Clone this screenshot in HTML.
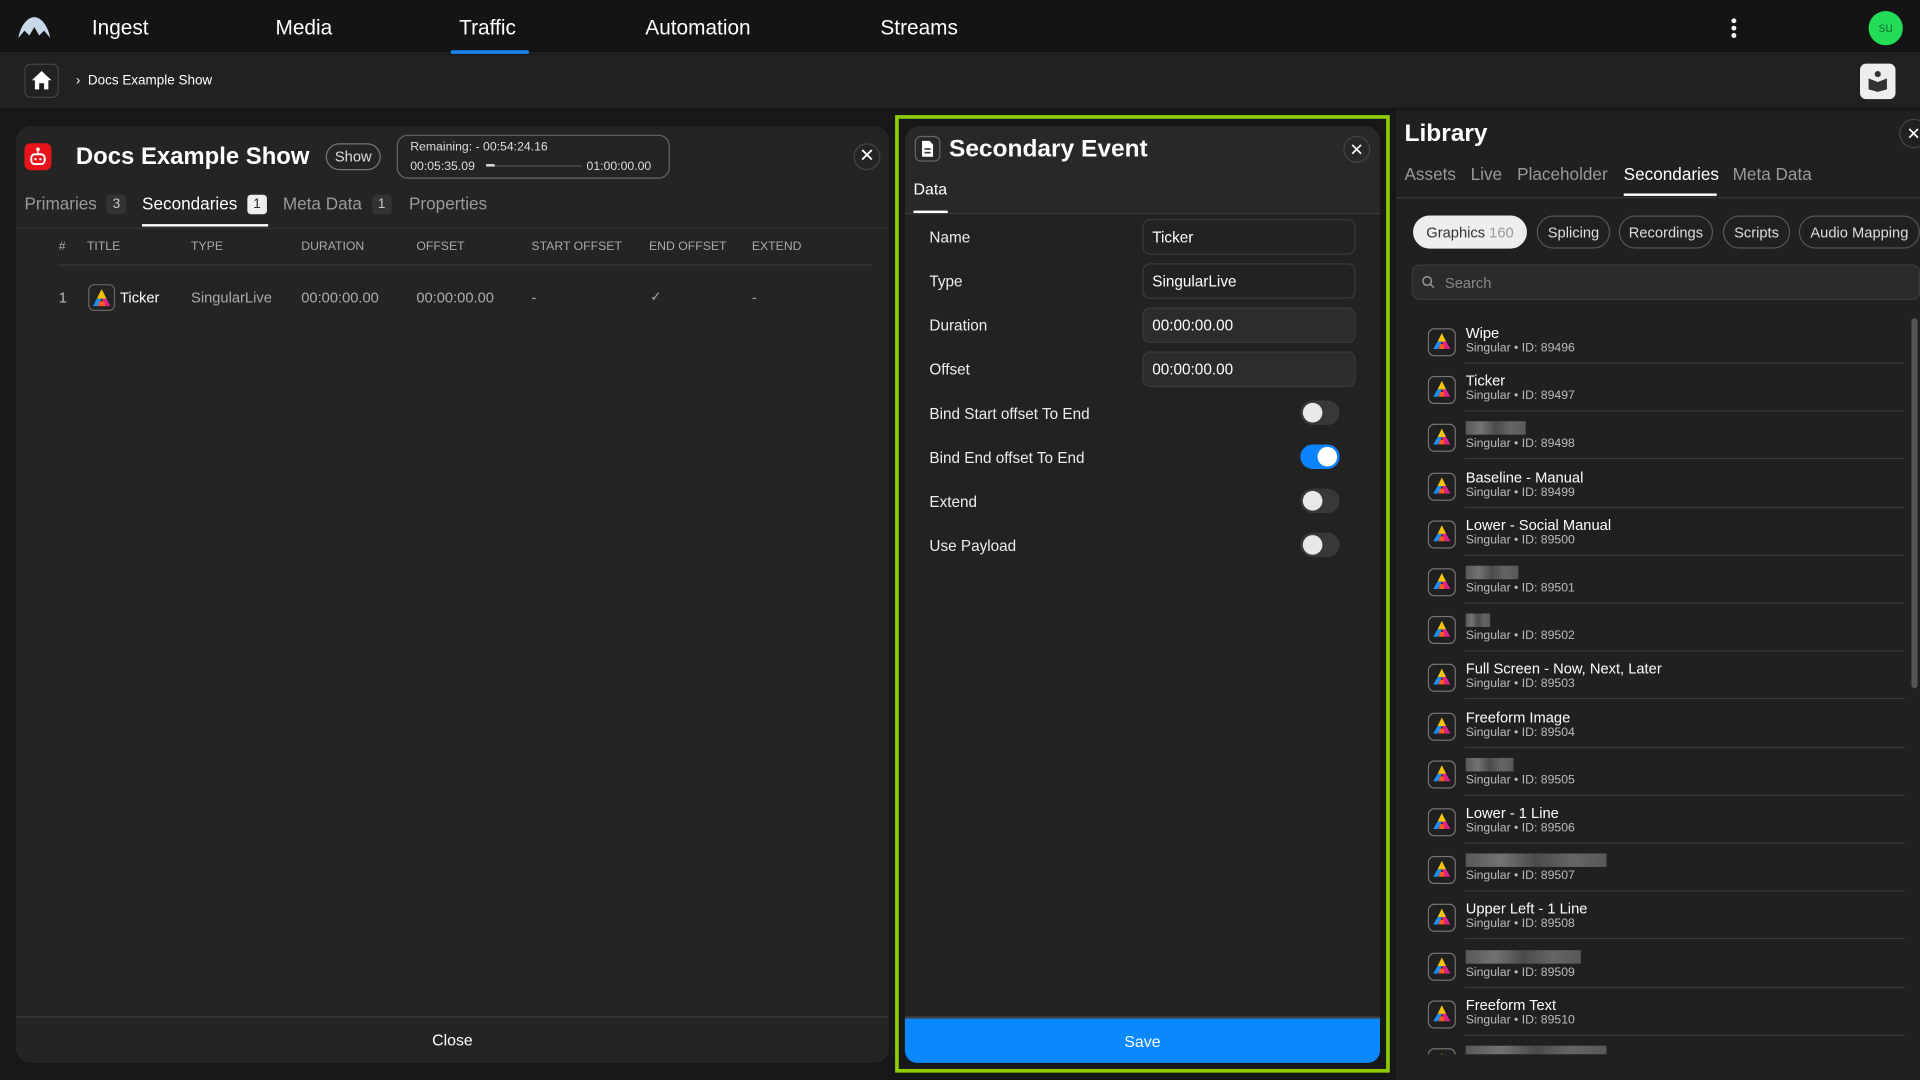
<!DOCTYPE html>
<html><head><meta charset="utf-8">
<style>
*{box-sizing:border-box;margin:0;padding:0}
html,body{width:1920px;height:1080px;overflow:hidden;background:#161616}
#w{width:1568px;height:882px;transform:scale(1.2244898);transform-origin:0 0;position:relative;font-family:"Liberation Sans",sans-serif;color:#fff;background:#171717}
.a{position:absolute}
.nav{left:0;top:0;width:1568px;height:44px;background:#141414;border-bottom:1px solid #2a2a2a}
.nav span{position:absolute;top:13px;font-size:17px;color:#fff}
.crumb{left:0;top:45px;width:1568px;height:43px;background:#212121}
.panel{background:#242424;border-radius:12px}
.tab{position:absolute;font-size:14px;color:#9a9a9a;white-space:nowrap}
.badge{display:inline-block;background:#333;color:#ccc;font-size:11px;padding:2px 5px;border-radius:3px;margin-left:8px;vertical-align:1px}
.th{position:absolute;top:196px;font-size:10px;color:#aaa}
.lbl{position:absolute;left:759px;font-size:12.5px;color:#eee}
.inp{position:absolute;left:933px;width:174px;height:29px;border:1px solid #3a3a3a;border-radius:6px;font-size:12.5px;padding:7px 7px;color:#fff}
.tg{position:absolute;left:1062px;width:32px;height:20px;border-radius:10px;background:#383838}
.tg i{position:absolute;left:2px;top:2px;width:16px;height:16px;border-radius:50%;background:#e8e8e8}
.chip{position:absolute;top:176px;height:27px;border:1px solid #555;border-radius:14px;font-size:12px;color:#ddd;padding:6px 0;text-align:center;white-space:nowrap}
.it{position:absolute;left:1166px;width:390px;height:39px}
.it svg{position:absolute;left:0;top:3px}
.it .t{position:absolute;left:31px;top:0;font-size:12px;color:#fff;white-space:nowrap}
.it .s{position:absolute;left:31px;top:14px;font-size:10px;color:#bbb}
.it .ln{position:absolute;left:30px;top:31px;width:359px;height:1px;background:#3a3a3a}
.blur{display:inline-block;height:11px;background:linear-gradient(90deg,#666,#888,#555,#777,#666);opacity:.8;margin-top:1px}
</style></head><body><div id="w">
<div class="a nav">
<svg class="a" style="left:14px;top:12px" width="28" height="20" viewBox="0 0 28 20"><path d="M1 19 C3 8 9 2 14 2 C19 2 25 8 27 19 L22 13 L18 17 L14 10 L10 17 L6 13 Z" fill="#c9d9ea"/></svg>
<span style="left:75px">Ingest</span><span style="left:225px">Media</span><span style="left:375px">Traffic</span><span style="left:527px">Automation</span><span style="left:719px">Streams</span>
<div class="a" style="left:368px;top:41px;width:64px;height:3px;background:#1a82f0;border-radius:2px"></div>
<div class="a" style="left:1414px;top:15px;width:4px;height:4px;border-radius:2px;background:#fff;box-shadow:0 6px #fff,0 12px #fff"></div>
<div class="a" style="left:1526px;top:9px;width:28px;height:28px;border-radius:50%;background:#22dd55;color:#173;font-size:11px;text-align:center;line-height:28px">su</div>
</div>
<div class="a crumb">
<div class="a" style="left:20px;top:7px;width:28px;height:28px;border:1px solid #444;border-radius:5px"></div>
<svg class="a" style="left:25px;top:12px" width="18" height="17" viewBox="0 0 18 17"><path d="M9 1 L17 8.5 L14.5 8.5 L14.5 16 L11 16 L11 11 L7 11 L7 16 L3.5 16 L3.5 8.5 L1 8.5 Z" fill="#fff"/></svg>
<div class="a" style="left:62px;top:15px;font-size:11px">›&nbsp; Docs Example Show</div>
<div class="a" style="left:1519px;top:7px;width:29px;height:29px;background:#eee;border-radius:5px"></div>
<svg class="a" style="left:1524px;top:12px" width="19" height="19" viewBox="0 0 19 19"><circle cx="9.5" cy="3.5" r="2.5" fill="#333"/><path d="M2 7 L9.5 10 L17 7 L17 16 L9.5 18 L2 16 Z" fill="#333"/></svg>
</div>

<div class="a panel" style="left:13px;top:103px;width:713px;height:765px"></div>
<div class="a" style="left:20px;top:117px;width:22px;height:22px;background:#e8141a;border-radius:5px"></div>
<svg class="a" style="left:24px;top:120px" width="14" height="16" viewBox="0 0 14 16"><circle cx="7" cy="2" r="1.5" fill="#fff"/><rect x="1.5" y="6" width="11" height="8" rx="3" fill="none" stroke="#fff" stroke-width="1.6"/><line x1="7" y1="3" x2="7" y2="6" stroke="#fff"/><circle cx="5" cy="10" r="1" fill="#fff"/><circle cx="9" cy="10" r="1" fill="#fff"/></svg>
<div class="a" style="left:62px;top:117px;font-size:19.5px;font-weight:bold">Docs Example Show</div>
<div class="a" style="left:266px;top:117px;width:45px;height:22px;border:1px solid #777;border-radius:11px;font-size:12px;text-align:center;line-height:20px;color:#ddd">Show</div>
<div class="a" style="left:324px;top:110px;width:223px;height:36px;border:1px solid #666;border-radius:9px"></div>
<div class="a" style="left:335px;top:115px;font-size:10px;color:#ddd">Remaining: - 00:54:24.16</div>
<div class="a" style="left:335px;top:131px;font-size:10px;color:#ddd">00:05:35.09</div>
<div class="a" style="left:397px;top:135px;width:78px;height:1px;background:#555"></div>
<div class="a" style="left:397px;top:134px;width:7px;height:2px;background:#ddd"></div>
<div class="a" style="left:479px;top:131px;font-size:10px;color:#ddd">01:00:00.00</div>
<div class="a" style="left:697px;top:117px;width:22px;height:22px;border:1px solid #444;border-radius:50%;text-align:center;line-height:20px;font-size:15px">✕</div>
<div class="tab" style="left:20px;top:158px">Primaries<span class="badge">3</span></div>
<div class="tab" style="left:116px;top:158px;color:#fff">Secondaries<span class="badge" style="background:#eee;color:#222">1</span></div>
<div class="a" style="left:116px;top:183px;width:103px;height:2px;background:#fff"></div>
<div class="tab" style="left:231px;top:158px">Meta Data<span class="badge">1</span></div>
<div class="tab" style="left:334px;top:158px">Properties</div>
<div class="a" style="left:13px;top:186px;width:713px;height:1px;background:#333"></div>
<div class="th" style="left:48px">#</div><div class="th" style="left:71px">TITLE</div><div class="th" style="left:156px">TYPE</div><div class="th" style="left:246px">DURATION</div><div class="th" style="left:340px">OFFSET</div><div class="th" style="left:434px">START OFFSET</div><div class="th" style="left:530px">END OFFSET</div><div class="th" style="left:614px">EXTEND</div>
<div class="a" style="left:47px;top:216px;width:665px;height:1px;background:#3a3a3a"></div>
<div class="a" style="left:48px;top:236px;font-size:12px;color:#bbb">1</div>
<div class="a" style="left:72px;top:232px;width:22px;height:22px;border:1px solid #666;border-radius:5px"></div>
<svg class="a" style="left:75px;top:235px" width="16" height="16" viewBox="0 0 16 16"><polygon points="8,1 12,9 4,9" fill="#f5c400"/><polygon points="4,9 8,9 5,15 1,15" fill="#1a8fff"/><polygon points="8,9 12,9 15,15 11,15" fill="#e0208a"/><polygon points="6,11 10,11 11,15 5,15" fill="#ff5a1f"/></svg>
<div class="a" style="left:98px;top:236px;font-size:12px">Ticker</div>
<div class="a" style="left:156px;top:236px;font-size:12px;color:#aaa">SingularLive</div>
<div class="a" style="left:246px;top:236px;font-size:12px;color:#aaa">00:00:00.00</div>
<div class="a" style="left:340px;top:236px;font-size:12px;color:#aaa">00:00:00.00</div>
<div class="a" style="left:434px;top:236px;font-size:12px;color:#aaa">-</div>
<div class="a" style="left:531px;top:236px;font-size:11px;color:#aaa">✓</div>
<div class="a" style="left:614px;top:236px;font-size:12px;color:#aaa">-</div>
<div class="a" style="left:13px;top:830px;width:713px;height:1px;background:#3a3a3a"></div>
<div class="a" style="left:13px;top:842px;width:713px;text-align:center;font-size:13px">Close</div>

<div class="a" style="left:731px;top:94px;width:404px;height:782px;border:3px solid #8ccc00"></div>
<div class="a" style="left:739px;top:103px;width:388px;height:765px;background:#222;border-radius:12px 12px 10px 10px"></div>
<div class="a" style="left:739px;top:103px;width:388px;height:72px;background:#282828;border-radius:12px 12px 0 0"></div>
<div class="a" style="left:747px;top:111px;width:21px;height:21px;border:1px solid #666;border-radius:5px"></div>
<svg class="a" style="left:751px;top:114px" width="13" height="15" viewBox="0 0 13 15"><path d="M2 1 L8 1 L11 4 L11 14 L2 14 Z" fill="#fff"/><rect x="4" y="7" width="5" height="1.3" fill="#333"/><rect x="4" y="10" width="5" height="1.3" fill="#333"/></svg>
<div class="a" style="left:775px;top:111px;font-size:20px;font-weight:bold">Secondary Event</div>
<div class="a" style="left:1097px;top:111px;width:22px;height:22px;border:1px solid #444;border-radius:50%;text-align:center;line-height:20px;font-size:14px">✕</div>
<div class="a" style="left:746px;top:147px;font-size:13px">Data</div>
<div class="a" style="left:746px;top:172px;width:28px;height:2px;background:#fff"></div>
<div class="a" style="left:739px;top:174px;width:388px;height:1px;background:#3a3a3a"></div>
<div class="lbl" style="top:187px">Name</div><div class="inp" style="top:179px">Ticker</div>
<div class="lbl" style="top:223px">Type</div><div class="inp" style="top:215px">SingularLive</div>
<div class="lbl" style="top:259px">Duration</div><div class="inp" style="top:251px;background:#2c2c2c">00:00:00.00</div>
<div class="lbl" style="top:295px">Offset</div><div class="inp" style="top:287px;background:#2c2c2c">00:00:00.00</div>
<div class="lbl" style="top:331px">Bind Start offset To End</div><div class="tg" style="top:327px"><i></i></div>
<div class="lbl" style="top:367px">Bind End offset To End</div><div class="tg" style="top:363px;background:#0a84ff"><i style="left:14px;background:#fff"></i></div>
<div class="lbl" style="top:403px">Extend</div><div class="tg" style="top:399px"><i></i></div>
<div class="lbl" style="top:439px">Use Payload</div><div class="tg" style="top:435px"><i></i></div>
<div class="a" style="left:739px;top:830px;width:388px;height:38px;background:#0a88ff;border-radius:0 0 10px 10px;border-top:2px solid #444;text-align:center;font-size:13px;line-height:38px">Save</div>

<div class="a" style="left:1140px;top:90px;width:428px;height:792px;background:#202020"></div>
<div class="a" style="left:1147px;top:98px;font-size:20px;font-weight:bold">Library</div>
<div class="a" style="left:1551px;top:97px;width:24px;height:24px;border:1px solid #444;border-radius:50%;font-size:14px;line-height:22px;padding-left:5px">✕</div>
<div class="tab" style="left:1147px;top:134px">Assets</div><div class="tab" style="left:1201px;top:134px">Live</div><div class="tab" style="left:1239px;top:134px">Placeholder</div><div class="tab" style="left:1326px;top:134px;color:#fff">Secondaries</div><div class="tab" style="left:1415px;top:134px">Meta Data</div>
<div class="a" style="left:1326px;top:158px;width:76px;height:2px;background:#fff"></div>
<div class="a" style="left:1140px;top:161px;width:428px;height:1px;background:#3a3a3a"></div>
<div class="chip" style="left:1154px;width:93px;background:#eee;color:#333;border-color:#eee">Graphics <span style="color:#999">160</span></div>
<div class="chip" style="left:1255px;width:60px">Splicing</div>
<div class="chip" style="left:1322px;width:77px">Recordings</div>
<div class="chip" style="left:1407px;width:55px">Scripts</div>
<div class="chip" style="left:1469px;width:99px">Audio Mapping</div>
<div class="a" style="left:1153px;top:216px;width:415px;height:29px;background:#2b2b2b;border:1px solid #3a3a3a;border-radius:6px"></div>
<svg class="a" style="left:1161px;top:225px" width="11" height="11" viewBox="0 0 11 11"><circle cx="4.5" cy="4.5" r="3.5" fill="none" stroke="#999" stroke-width="1.2"/><line x1="7" y1="7" x2="10" y2="10" stroke="#999" stroke-width="1.2"/></svg>
<div class="a" style="left:1180px;top:224px;font-size:12px;color:#888">Search</div>
<div class="a" style="left:1561px;top:260px;width:5px;height:302px;background:#555;border-radius:3px"></div>
<div id="list"></div>
</div>
<script>
var items=[["Wipe",89496],["Ticker",89497],["#60",89498],["Baseline - Manual",89499],["Lower - Social Manual",89500],["#52",89501],["#25",89502],["Full Screen - Now, Next, Later",89503],["Freeform Image",89504],["#48",89505],["Lower - 1 Line",89506],["#140",89507],["Upper Left - 1 Line",89508],["#115",89509],["Freeform Text",89510],["#140",89511]];
var h="";items.forEach(function(it,i){var y=265+i*39.2;var t=it[0][0]=="#"?'<span class="blur" style="width:'+it[0].slice(1)/1.22+'px"></span>':it[0];
h+='<div class="it" style="top:'+y+'px"><svg width="23" height="23" viewBox="0 0 23 23"><rect x="0.5" y="0.5" width="22" height="22" rx="5" fill="none" stroke="#777"/><polygon points="11.5,4 15,11 8,11" fill="#f5c400"/><polygon points="8,11 11.5,11 8.5,17 4.5,17" fill="#1a8fff"/><polygon points="11.5,11 15,11 18.5,17 14.5,17" fill="#e0208a"/><polygon points="10,13 13,13 14,17 9,17" fill="#ff5a1f"/></svg><div class="t">'+t+'</div><div class="s">Singular • ID: '+it[1]+'</div>'+(i<15?'<div class="ln"></div>':'')+'</div>';});
document.getElementById("list").innerHTML=h;
</script>
<style>.it:last-child{height:8px;overflow:hidden}</style>
</body></html>
